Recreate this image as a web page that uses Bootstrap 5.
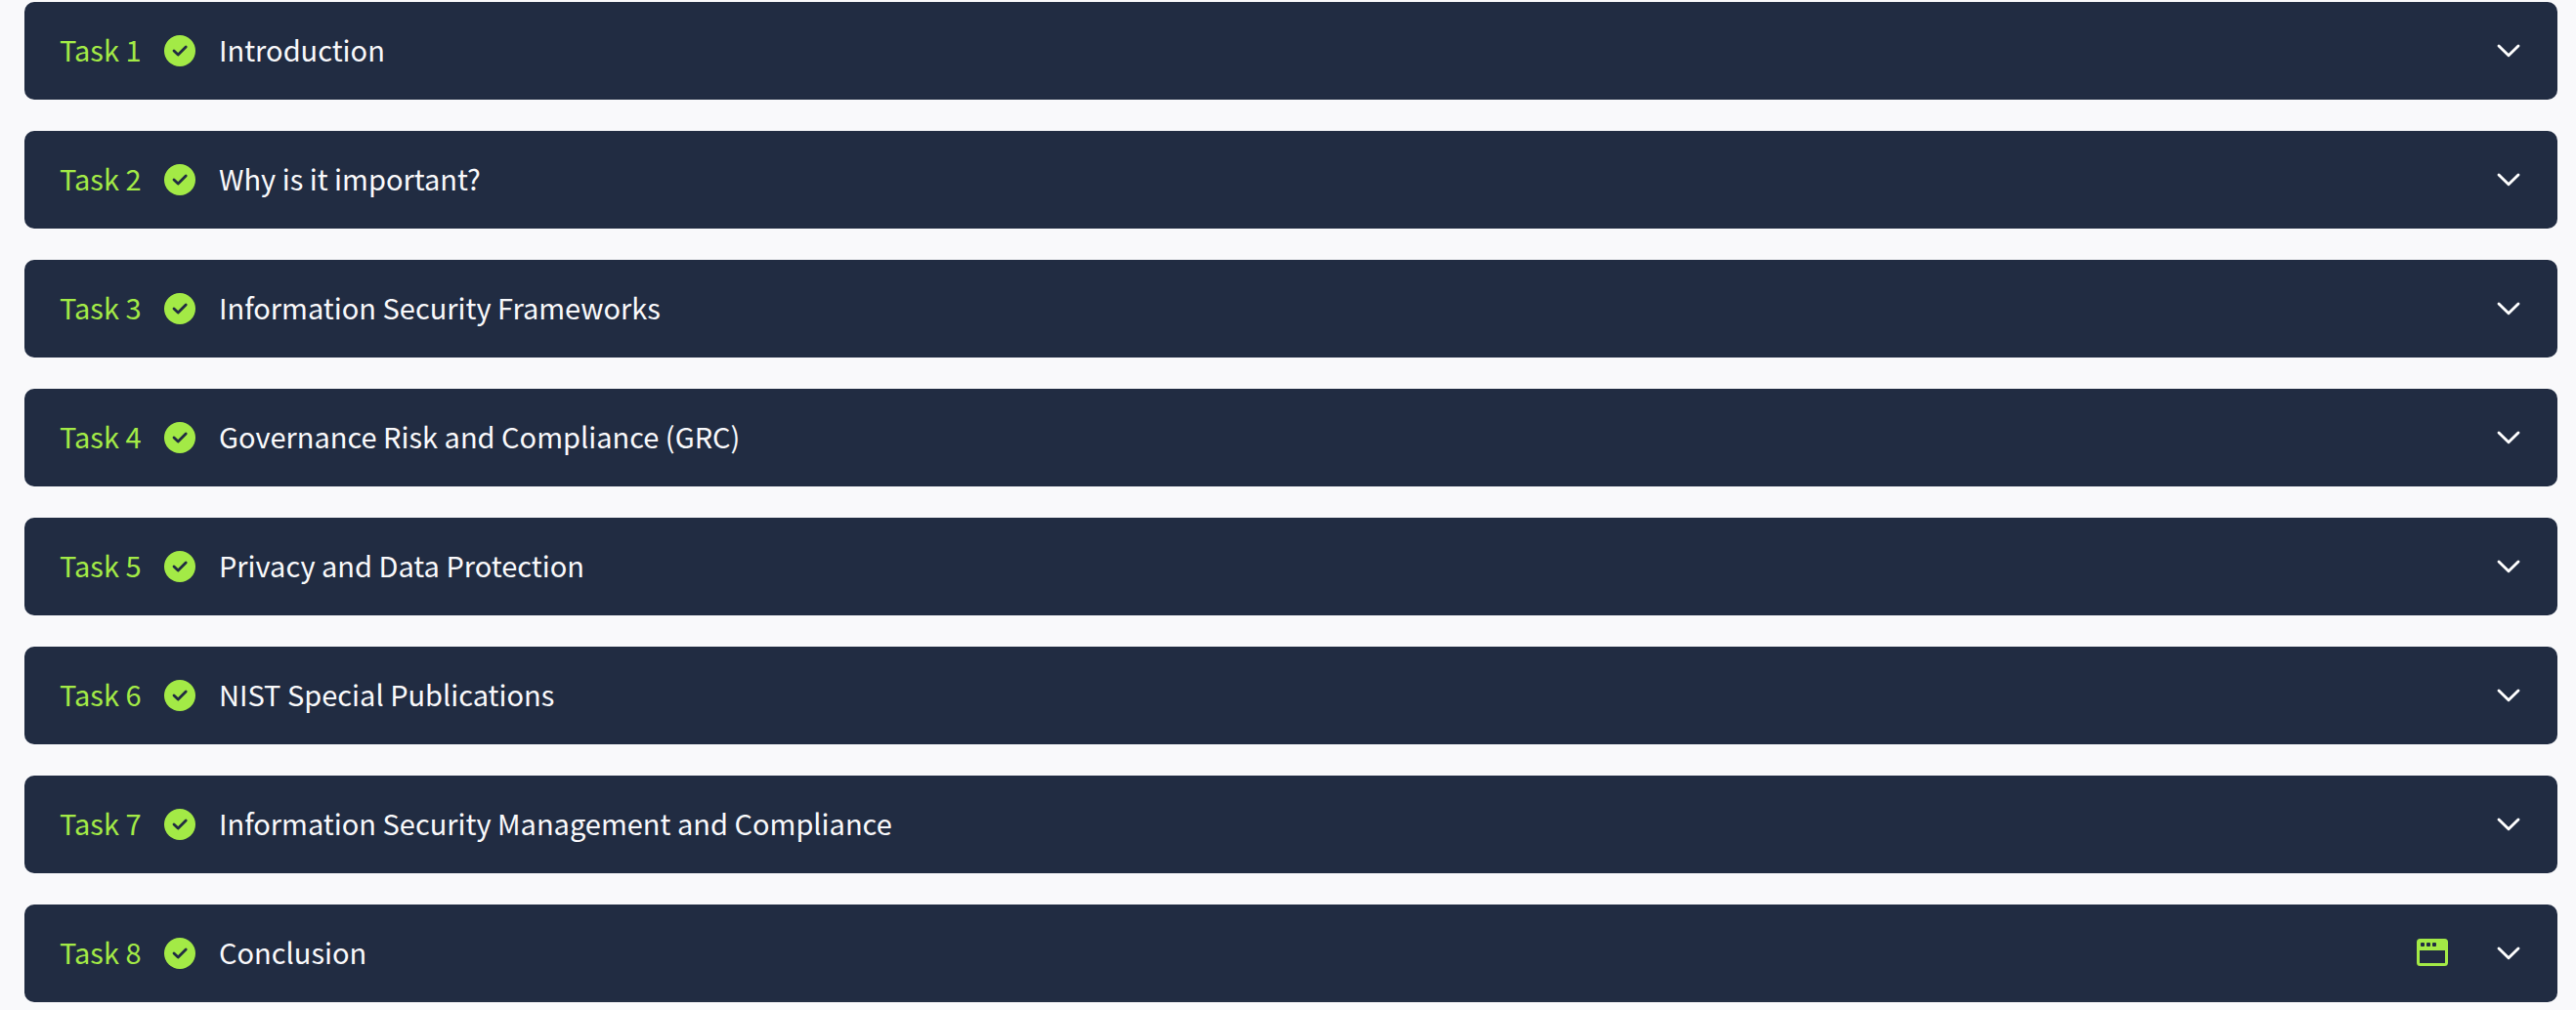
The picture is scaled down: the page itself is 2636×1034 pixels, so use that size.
<!DOCTYPE html>
<html lang="en">
<head>
<meta charset="utf-8">
<meta name="viewport" content="width=device-width, initial-scale=1">
<title>Room tasks</title>
<link href="https://cdn.jsdelivr.net/npm/bootstrap@5.3.0/dist/css/bootstrap.min.css" rel="stylesheet">
<style>
  body { background: #f9f9fb; font-family: "Noto Sans CJK SC", "Noto Sans", sans-serif; }
  .task-list { padding: 2px 19px 8px 25px; gap: 32px; }
  .task-toggle {
    --bs-btn-color: #f9f9fb; --bs-btn-bg: #212c42;
    --bs-btn-hover-color: #fff; --bs-btn-hover-bg: #2a3750;
    --bs-btn-active-color: #fff; --bs-btn-active-bg: #2a3750;
    --bs-btn-border-width: 0;
    --bs-btn-border-radius: 10px;
    --bs-btn-padding-x: 36px; --bs-btn-padding-y: 28px;
    --bs-btn-font-size: 29px; --bs-btn-line-height: 40px;
    gap: 24px;
  }
  .task-toggle > span { padding-bottom: 4px; }
  .task-number { width: 83px; color: #a3ea46; }
</style>
</head>
<body>
<svg class="d-none" aria-hidden="true">
  <symbol id="icon-done" viewBox="0 0 32 32">
    <circle cx="16" cy="16" r="16" fill="#a3ea46"/>
    <path d="M10 16l4.200 4.100 8-8.100" fill="none" stroke="#212c42" stroke-width="2.800" stroke-linecap="round" stroke-linejoin="round"/>
  </symbol>
  <symbol id="icon-window" viewBox="0 -1 32 32">
    <path fill="#a3ea46" fill-rule="evenodd" d="M3.500 0h25A3.500 3.500 0 0 1 32 3.500v21a3.500 3.500 0 0 1-3.500 3.500h-25A3.500 3.500 0 0 1 0 24.500v-21A3.500 3.500 0 0 1 3.500 0zM3 12v12.400a.6.6 0 0 0 .6.600h24.800a.6.6 0 0 0 .6-.600V12zM5 4a1 1 0 0 0-1 1v2a1 1 0 0 0 1 1h2a1 1 0 0 0 1-1V5a1 1 0 0 0-1-1zM11 4a1 1 0 0 0-1 1v2a1 1 0 0 0 1 1h2a1 1 0 0 0 1-1V5a1 1 0 0 0-1-1zM17 4a1 1 0 0 0-1 1v2a1 1 0 0 0 1 1h2a1 1 0 0 0 1-1V5a1 1 0 0 0-1-1z"/>
  </symbol>
  <symbol id="icon-chevron" viewBox="0 0 28 28">
    <path d="M4 9l10 9.800L24 9" fill="none" stroke="#fff" stroke-width="2.900" stroke-linecap="round" stroke-linejoin="round"/>
  </symbol>
</svg>

<main class="task-list d-flex flex-column">
  <button type="button" class="task-toggle btn d-flex align-items-center w-100 text-start">
    <span class="task-number flex-shrink-0 text-nowrap">Task 1</span>
    <svg width="32" height="32" class="flex-shrink-0" role="img" aria-label="Completed"><use href="#icon-done"/></svg>
    <span class="flex-grow-1">Introduction</span>
    <svg width="28" height="28" class="flex-shrink-0" aria-hidden="true"><use href="#icon-chevron"/></svg>
  </button>
  <button type="button" class="task-toggle btn d-flex align-items-center w-100 text-start">
    <span class="task-number flex-shrink-0 text-nowrap">Task 2</span>
    <svg width="32" height="32" class="flex-shrink-0" role="img" aria-label="Completed"><use href="#icon-done"/></svg>
    <span class="flex-grow-1">Why is it important?</span>
    <svg width="28" height="28" class="flex-shrink-0" aria-hidden="true"><use href="#icon-chevron"/></svg>
  </button>
  <button type="button" class="task-toggle btn d-flex align-items-center w-100 text-start">
    <span class="task-number flex-shrink-0 text-nowrap">Task 3</span>
    <svg width="32" height="32" class="flex-shrink-0" role="img" aria-label="Completed"><use href="#icon-done"/></svg>
    <span class="flex-grow-1">Information Security Frameworks</span>
    <svg width="28" height="28" class="flex-shrink-0" aria-hidden="true"><use href="#icon-chevron"/></svg>
  </button>
  <button type="button" class="task-toggle btn d-flex align-items-center w-100 text-start">
    <span class="task-number flex-shrink-0 text-nowrap">Task 4</span>
    <svg width="32" height="32" class="flex-shrink-0" role="img" aria-label="Completed"><use href="#icon-done"/></svg>
    <span class="flex-grow-1">Governance Risk and Compliance (GRC)</span>
    <svg width="28" height="28" class="flex-shrink-0" aria-hidden="true"><use href="#icon-chevron"/></svg>
  </button>
  <button type="button" class="task-toggle btn d-flex align-items-center w-100 text-start">
    <span class="task-number flex-shrink-0 text-nowrap">Task 5</span>
    <svg width="32" height="32" class="flex-shrink-0" role="img" aria-label="Completed"><use href="#icon-done"/></svg>
    <span class="flex-grow-1">Privacy and Data Protection</span>
    <svg width="28" height="28" class="flex-shrink-0" aria-hidden="true"><use href="#icon-chevron"/></svg>
  </button>
  <button type="button" class="task-toggle btn d-flex align-items-center w-100 text-start">
    <span class="task-number flex-shrink-0 text-nowrap">Task 6</span>
    <svg width="32" height="32" class="flex-shrink-0" role="img" aria-label="Completed"><use href="#icon-done"/></svg>
    <span class="flex-grow-1">NIST Special Publications</span>
    <svg width="28" height="28" class="flex-shrink-0" aria-hidden="true"><use href="#icon-chevron"/></svg>
  </button>
  <button type="button" class="task-toggle btn d-flex align-items-center w-100 text-start">
    <span class="task-number flex-shrink-0 text-nowrap">Task 7</span>
    <svg width="32" height="32" class="flex-shrink-0" role="img" aria-label="Completed"><use href="#icon-done"/></svg>
    <span class="flex-grow-1">Information Security Management and Compliance</span>
    <svg width="28" height="28" class="flex-shrink-0" aria-hidden="true"><use href="#icon-chevron"/></svg>
  </button>
  <button type="button" class="task-toggle btn d-flex align-items-center w-100 text-start">
    <span class="task-number flex-shrink-0 text-nowrap">Task 8</span>
    <svg width="32" height="32" class="flex-shrink-0" role="img" aria-label="Completed"><use href="#icon-done"/></svg>
    <span class="flex-grow-1">Conclusion</span>
    <svg width="32" height="32" class="flex-shrink-0 me-4" role="img" aria-label="Has a site view"><use href="#icon-window"/></svg>
    <svg width="28" height="28" class="flex-shrink-0" aria-hidden="true"><use href="#icon-chevron"/></svg>
  </button>
</main>
<script src="https://cdn.jsdelivr.net/npm/bootstrap@5.3.0/dist/js/bootstrap.bundle.min.js"></script>
</body>
</html>
